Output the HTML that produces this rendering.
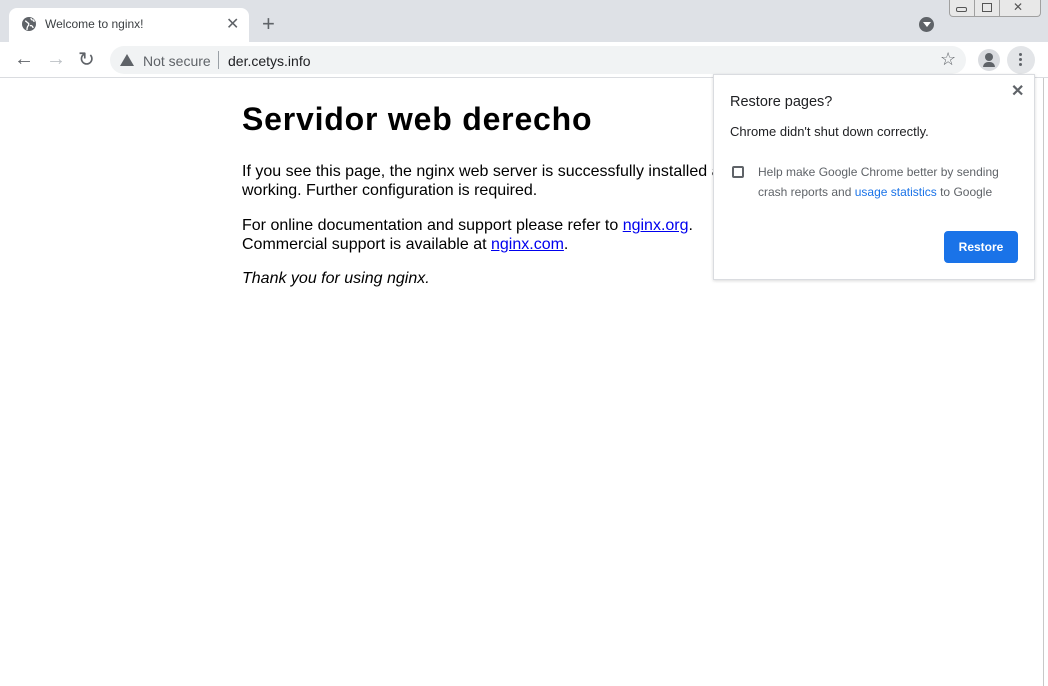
<!DOCTYPE html>
<html><head><style>
*{margin:0;padding:0;box-sizing:border-box}
body{width:1048px;height:686px;overflow:hidden;background:#fff;font-family:"Liberation Sans",sans-serif;position:relative}
.abs{position:absolute}
</style></head><body>
<div class="abs" style="left:0;top:0;width:1048px;height:42px;background:#dee1e6"></div>
<div class="abs" style="left:9px;top:8px;width:240px;height:36px;background:#fff;border-radius:8px 8px 0 0"></div>
<svg class="abs" style="left:22px;top:17px" width="14" height="14" viewBox="0 0 14 14"><circle cx="7" cy="7" r="7" fill="#5f6368"/><path d="M3 4c2 0 2 2 3 2s1 2 0 3-1 2-1 4M9 1c0 2 1 2 2 2s1 1 1 2M8 9c1-1 3 0 3 2" stroke="#fff" stroke-width="1.3" fill="none"/></svg>
<div class="abs" style="left:45px;top:17px;font-size:12px;color:#3c4043">Welcome to nginx!</div>
<div class="abs" style="left:226px;top:14px;font-size:16px;color:#5f6368">✕</div>
<div class="abs" style="left:262px;top:11px;font-size:22px;color:#5f6368">+</div>
<div class="abs" style="left:919px;top:17px;width:15px;height:15px;border-radius:50%;background:#5f6368"></div>
<div class="abs" style="left:923px;top:22px;width:0;height:0;border-left:4px solid transparent;border-right:4px solid transparent;border-top:5px solid #fff"></div>
<div class="abs" style="left:949px;top:0;width:92px;height:17px;border:1px solid #a0a0a0;border-top:none;border-radius:0 0 4px 4px;background:#e8e8e8"></div>
<div class="abs" style="left:974px;top:0;width:1px;height:17px;background:#a0a0a0"></div>
<div class="abs" style="left:999px;top:0;width:1px;height:17px;background:#a0a0a0"></div>
<div class="abs" style="left:956px;top:7px;width:11px;height:5px;border:1px solid #555;border-radius:2px"></div>
<div class="abs" style="left:982px;top:3px;width:10px;height:9px;border:1px solid #555"></div>
<div class="abs" style="left:1013px;top:0px;font-size:12px;color:#555">✕</div>
<div class="abs" style="left:0;top:42px;width:1048px;height:36px;background:#fff;border-bottom:1px solid #dadce0"></div>
<div class="abs" style="left:14px;top:48px;font-size:20px;color:#5f6368">←</div>
<div class="abs" style="left:46px;top:48px;font-size:20px;color:#bdc1c6">→</div>
<div class="abs" style="left:78px;top:47px;font-size:20px;color:#5f6368">↻</div>
<div class="abs" style="left:110px;top:46px;width:856px;height:28px;background:#f1f3f4;border-radius:14px"></div>
<div class="abs" style="left:120px;top:54px;width:0;height:0;border-left:7px solid transparent;border-right:7px solid transparent;border-bottom:12px solid #5f6368"></div>
<div class="abs" style="left:143px;top:53px;font-size:14px;color:#5f6368">Not secure</div>
<div class="abs" style="left:218px;top:51px;width:1px;height:18px;background:#9aa0a6"></div>
<div class="abs" style="left:228px;top:53px;font-size:14px;color:#202124">der.cetys.info</div>
<div class="abs" style="left:940px;top:49px;font-size:18px;color:#5f6368">☆</div>
<div class="abs" style="left:978px;top:49px;width:22px;height:22px;border-radius:50%;background:#dadce0"></div>
<div class="abs" style="left:985px;top:53px;width:8px;height:8px;border-radius:50%;background:#5f6368"></div>
<div class="abs" style="left:983px;top:62px;width:12px;height:5px;border-radius:5px 5px 0 0;background:#5f6368"></div>
<div class="abs" style="left:1007px;top:46px;width:28px;height:28px;border-radius:50%;background:#e3e5e8"></div>
<div class="abs" style="left:1019px;top:53px;width:3px;height:3px;border-radius:50%;background:#5f6368;box-shadow:0 5px 0 #5f6368,0 10px 0 #5f6368"></div>
<div class="abs" style="left:1043px;top:78px;width:1px;height:608px;background:#c8c8c8"></div>

<div class="abs" style="left:242px;top:101px;font-size:32px;font-weight:bold;color:#000;letter-spacing:0.8px">Servidor web derecho</div>
<div class="abs" style="left:242px;top:162px;font-size:16px;line-height:19px;color:#000;width:520px">If you see this page, the nginx web server is successfully installed and<br>working. Further configuration is required.</div>
<div class="abs" style="left:242px;top:216px;font-size:16px;line-height:19px;color:#000;width:520px">For online documentation and support please refer to <span style="color:#00e;text-decoration:underline">nginx.org</span>.<br>Commercial support is available at <span style="color:#00e;text-decoration:underline">nginx.com</span>.</div>
<div class="abs" style="left:242px;top:270px;font-size:16px;font-style:italic;color:#000">Thank you for using nginx.</div>

<div class="abs" style="left:713px;top:74px;width:322px;height:206px;background:#fff;border:1px solid #dadce0;box-shadow:0 1px 3px rgba(0,0,0,.15)"></div>
<div class="abs" style="left:1011px;top:81px;font-size:16px;font-weight:bold;color:#5f6368">✕</div>
<div class="abs" style="left:730px;top:94px;font-size:14.5px;color:#202124">Restore pages?</div>
<div class="abs" style="left:730px;top:124px;font-size:13px;color:#202124">Chrome didn't shut down correctly.</div>
<div class="abs" style="left:732px;top:166px;width:12px;height:12px;border:2px solid #5f6368;border-radius:2px"></div>
<div class="abs" style="left:758px;top:162px;font-size:12px;line-height:20px;color:#5f6368">Help make Google Chrome better by sending<br>crash reports and <span style="color:#1a73e8">usage statistics</span> to Google</div>
<div class="abs" style="left:944px;top:231px;width:74px;height:32px;background:#1a73e8;border-radius:4px;color:#fff;font-size:12px;font-weight:bold;text-align:center;line-height:32px">Restore</div>
</body></html>
